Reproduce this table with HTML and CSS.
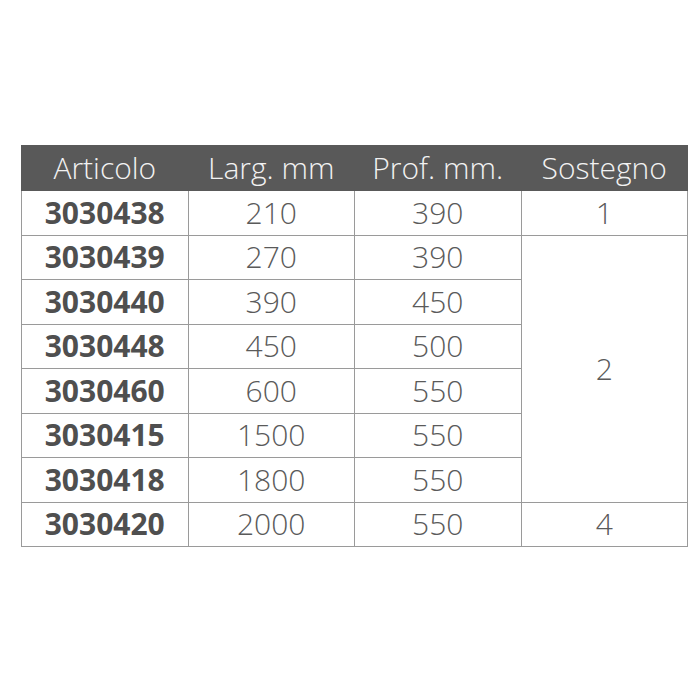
FILE: index.html
```html
<!DOCTYPE html>
<html lang="it">
<head>
<meta charset="utf-8">
<title>Tabella articoli</title>
<link rel="stylesheet" href="styles.css">
</head>
<body>
<table class="spec">
  <thead>
    <tr>
      <th>Articolo</th>
      <th>Larg. mm</th>
      <th>Prof. mm.</th>
      <th>Sostegno</th>
    </tr>
  </thead>
  <tbody>
    <tr><td class="code">3030438</td><td>210</td><td>390</td><td>1</td></tr>
    <tr><td class="code">3030439</td><td>270</td><td>390</td><td rowspan="6">2</td></tr>
    <tr><td class="code">3030440</td><td>390</td><td>450</td></tr>
    <tr><td class="code">3030448</td><td>450</td><td>500</td></tr>
    <tr><td class="code">3030460</td><td>600</td><td>550</td></tr>
    <tr><td class="code">3030415</td><td>1500</td><td>550</td></tr>
    <tr><td class="code">3030418</td><td>1800</td><td>550</td></tr>
    <tr><td class="code">3030420</td><td>2000</td><td>550</td><td>4</td></tr>
  </tbody>
</table>
</body>
</html>
```

FILE: styles.css
```css
html, body {
  margin: 0;
  padding: 0;
  background: #ffffff;
}

body {
  padding: 145px 0 0 21px;
  font-family: "Open Sans", "Liberation Sans", sans-serif;
}

.spec {
  width: 667px;
  border-collapse: collapse;
  table-layout: fixed;
}

.spec th {
  background: #595959;
  color: #f2f2f2;
  font-weight: 300;
  font-size: 30px;
  height: 44px;
  padding: 0;
  text-align: center;
  vertical-align: middle;
  border: 1px solid #595959;
  line-height: 44px;
}

.spec td {
  height: 43.5px;
  padding: 0;
  text-align: center;
  vertical-align: middle;
  font-size: 30px;
  font-weight: 300;
  color: #5a5a5a;
  border: 1px solid #9a9a9a;
  line-height: 40px;
}

.spec td.code {
  font-weight: 700;
  color: #4f4f4f;
}
```
